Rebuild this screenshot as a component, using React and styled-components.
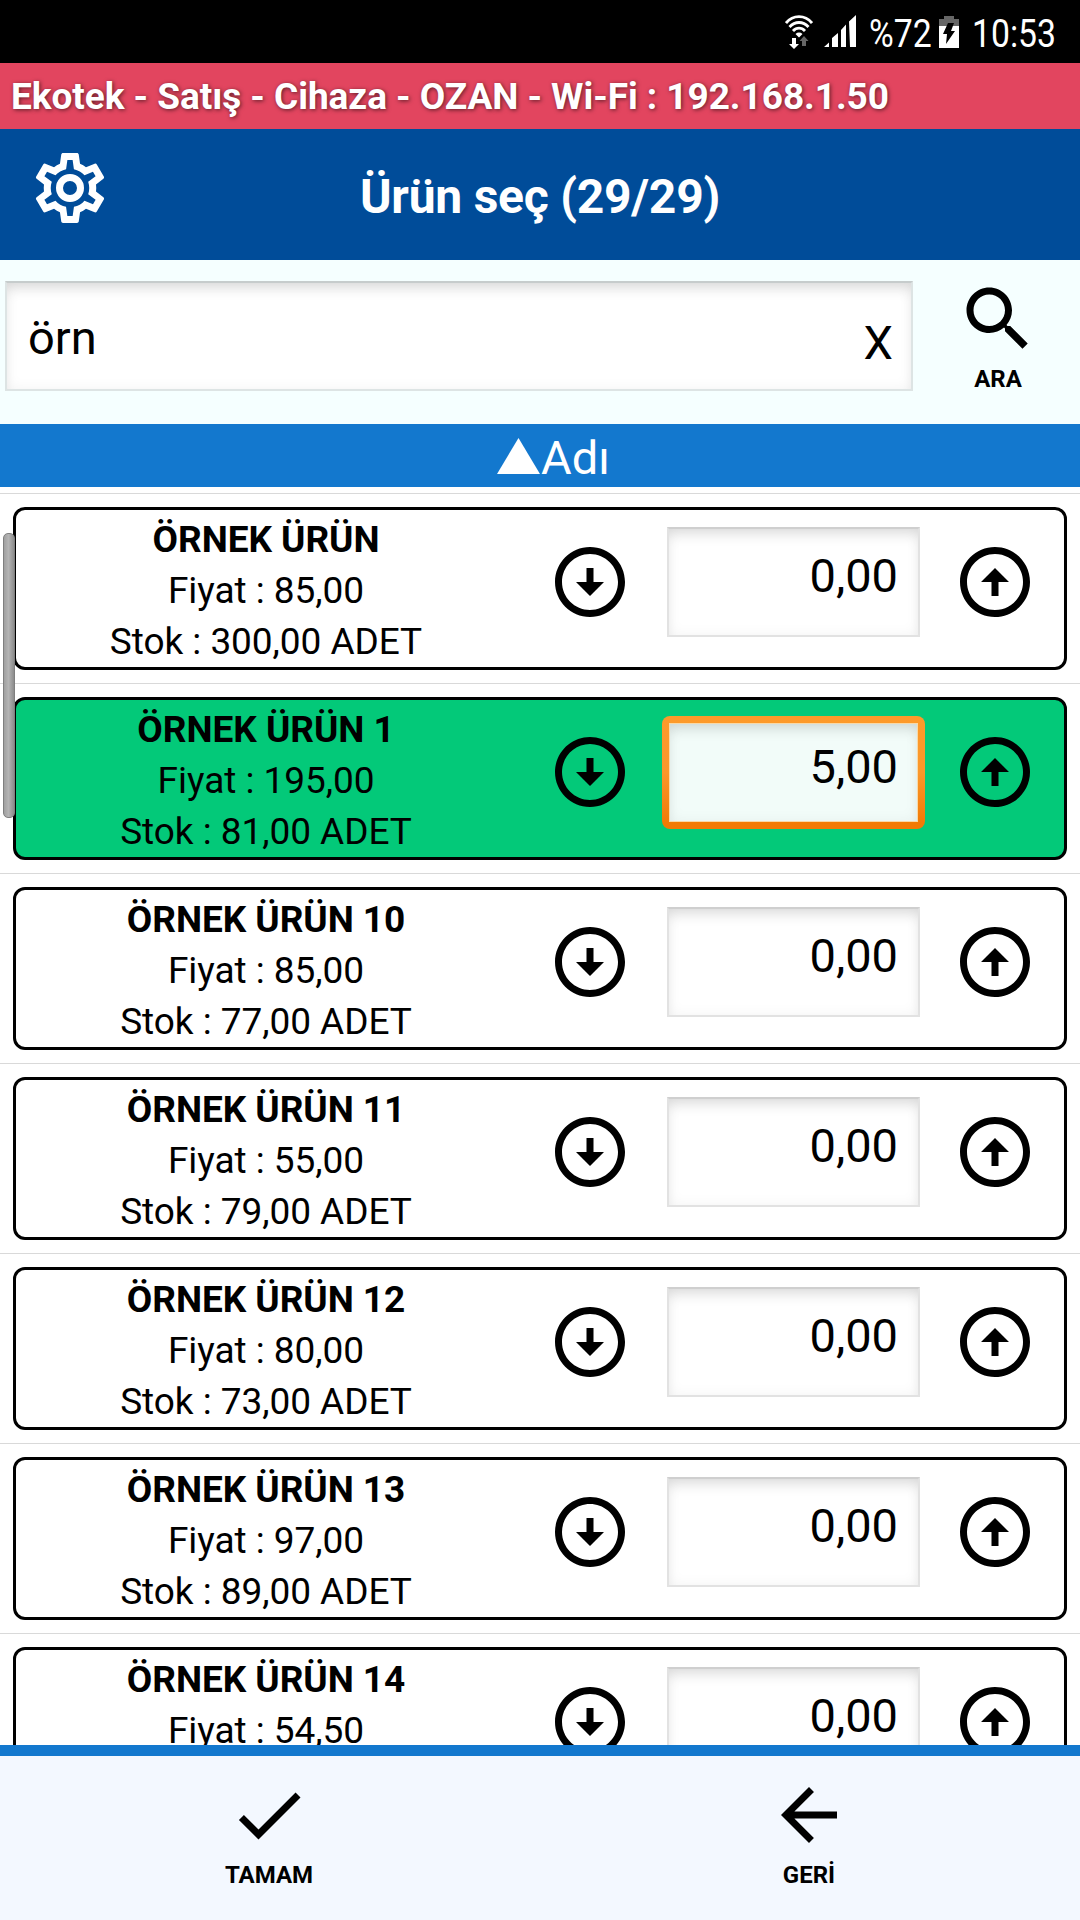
import React from 'react';
import styled, { createGlobalStyle } from 'styled-components';

const GlobalStyle = createGlobalStyle`
  * {
    box-sizing: border-box;
  }
  body {
    margin: 0;
    background: #fff;
    font-family: Roboto, sans-serif;
    color: #000;
  }
  input,
  button {
    font: inherit;
    color: inherit;
    border: none;
    background: none;
    padding: 0;
    outline: none;
  }
`;

const Screen = styled.div`
  width: 1080px;
  height: 1920px;
  display: flex;
  flex-direction: column;
  overflow: hidden;
`;

const StatusBar = styled.div`
  flex: none;
  height: 63px;
  background: #000;
  color: #fff;
  display: flex;
  align-items: center;
  justify-content: flex-end;
  padding-right: 25px;
  font-size: 39px;
  svg {
    display: block;
  }
`;

const StatusText = styled.span`
  width: ${({ $width }) => $width}px;
  margin-left: ${({ $left }) => $left}px;
  padding-top: 5px;
  white-space: nowrap;
  transform: scaleX(0.865);
  transform-origin: left;
`;

const StatusIcon = styled.svg`
  margin-left: ${({ $left }) => $left || 0}px;
`;

const ConnectionBar = styled.div`
  flex: none;
  height: 66px;
  line-height: 67px;
  padding-left: 11px;
  background: #e2455f;
  color: #fff;
  font-size: 37px;
  font-weight: 700;
  letter-spacing: -0.05px;
  white-space: nowrap;
  text-shadow: 1px 1px 4px rgba(0, 0, 0, 0.6);
`;

const Header = styled.header`
  flex: none;
  height: 131px;
  background: #004c99;
  color: #fff;
  display: grid;
  grid-template-columns: 140px 1fr 140px;
`;

const SettingsButton = styled.button`
  height: 84px;
  margin: 17px 0 0 28px;
  justify-self: start;
`;

const Title = styled.h1`
  margin: 0;
  padding-top: 2px;
  line-height: 131px;
  font-size: 48px;
  font-weight: 700;
  letter-spacing: -0.25px;
  text-align: center;
`;

const Glyph = styled.svg`
  display: block;
  width: 84px;
  height: 84px;
  fill: currentColor;
`;

const SearchBar = styled.div`
  flex: none;
  height: 164px;
  background: #f5ffff;
  display: flex;
  align-items: flex-start;
  padding: 17px 0 0 5px;
`;

const SearchField = styled.div`
  width: 908px;
  height: 110px;
  margin-top: 4px;
  padding: 0 18px 0 21px;
  display: flex;
  justify-content: space-between;
  background: #fff;
  border: 2px solid #dde4e4;
  border-top-color: #c6cccc;
  box-shadow: inset 0 10px 14px -5px rgba(0, 0, 0, 0.13), inset 0 0 14px rgba(0, 0, 0, 0.05);
  font-size: 47px;
`;

const SearchInput = styled.input`
  width: 600px;
  height: 109px;
`;

const ClearButton = styled.button`
  height: 119px;
`;

const SearchButton = styled.button`
  flex: 1;
  display: flex;
  flex-direction: column;
  align-items: center;
  gap: 4px;
  padding: 0 0 0 3px;
`;

const ButtonLabel = styled.span`
  font-size: 24px;
  line-height: 28px;
  font-weight: 700;
`;

const SortBar = styled.div`
  flex: none;
  height: 63px;
  line-height: 67px;
  background: #1378ce;
  color: #fff;
  display: flex;
  justify-content: center;
  padding-left: 27px;
  font-size: 47px;
`;

const SortArrow = styled.svg`
  width: 43px;
  height: 36px;
  margin: 14px 1px 0 0;
  fill: currentColor;
`;

const List = styled.div`
  flex: 1;
  min-height: 0;
  overflow: hidden;
  padding-top: 6px;
  position: relative;
`;

const ScrollThumb = styled.div`
  position: absolute;
  z-index: 1;
  left: 3px;
  top: 46px;
  width: 12px;
  height: 285px;
  border-radius: 5px;
  border: 1px solid #7f7f7f;
  background: linear-gradient(90deg, #a0a0a0, #b4b4b4 45%, #8c8c8c);
`;

const ListItem = styled.div`
  height: 190px;
  padding: 13px 13px;
  border-top: 1px solid #d9d9d9;
`;

const Card = styled.div`
  height: 163px;
  border: 3px solid #000;
  border-radius: 12px;
  background: ${({ $selected }) => ($selected ? '#03c979' : '#fff')};
  display: flex;
  align-items: flex-start;
`;

const Info = styled.div`
  width: 500px;
  padding-top: 4px;
  display: flex;
  flex-direction: column;
  align-items: center;
  font-size: 37px;
  line-height: 51px;
  letter-spacing: -0.05px;
  white-space: nowrap;
`;

const Name = styled.span`
  font-weight: 700;
`;

const StepButton = styled.button`
  height: 84px;
  margin: 30px 0 0 ${({ $left }) => $left}px;
`;

const Quantity = styled.input`
  width: 253px;
  height: 110px;
  margin: 17px 0 0 35px;
  padding: 0 20px 13px 0;
  text-align: right;
  font-size: 47px;
  background: #fff;
  border: 2px solid #e2e2e2;
  border-top-color: #cfcfcf;
  box-shadow: inset 0 10px 14px -5px rgba(0, 0, 0, 0.12), inset 0 0 14px rgba(0, 0, 0, 0.05);
`;

const FocusRing = styled.div`
  width: 263px;
  height: 113px;
  margin: 16px -5px 0 30px;
  padding: 7px;
  border-radius: 8px;
  background: linear-gradient(#fd9a2a 0%, #fb972a 50%, #f27a05 95%);
  ${Quantity} {
    display: block;
    width: 249px;
    height: 99px;
    margin: 0;
    padding: 0 19px 13px 0;
    background: #f2fcf9;
    border: 1px solid #f8d9a8;
  }
`;

const Footer = styled.footer`
  flex: none;
  height: 175px;
  border-top: 11px solid #1378ce;
  background: #f3f8ff;
  display: grid;
  grid-template-columns: 1fr 1fr;
`;

const FooterButton = styled.button`
  display: flex;
  flex-direction: column;
  align-items: center;
  padding: 17px 2px 0 0;
  gap: 4px;
`;

const products = [
  { name: 'ÖRNEK ÜRÜN', price: '85,00', stock: '300,00', quantity: '0,00' },
  { name: 'ÖRNEK ÜRÜN 1', price: '195,00', stock: '81,00', quantity: '5,00', selected: true },
  { name: 'ÖRNEK ÜRÜN 10', price: '85,00', stock: '77,00', quantity: '0,00' },
  { name: 'ÖRNEK ÜRÜN 11', price: '55,00', stock: '79,00', quantity: '0,00' },
  { name: 'ÖRNEK ÜRÜN 12', price: '80,00', stock: '73,00', quantity: '0,00' },
  { name: 'ÖRNEK ÜRÜN 13', price: '97,00', stock: '89,00', quantity: '0,00' },
  { name: 'ÖRNEK ÜRÜN 14', price: '54,50', quantity: '0,00' },
];

const icons = {
  settings:
    'M12,8A4,4 0 0,1 16,12A4,4 0 0,1 12,16A4,4 0 0,1 8,12A4,4 0 0,1 12,8M12,10A2,2 0 0,0 10,12A2,2 0 0,0 12,14A2,2 0 0,0 14,12A2,2 0 0,0 12,10M10,22C9.75,22 9.54,21.82 9.5,21.58L9.13,18.93C8.5,18.68 7.96,18.34 7.44,17.94L4.95,18.95C4.73,19.03 4.46,18.95 4.34,18.73L2.34,15.27C2.21,15.05 2.27,14.78 2.46,14.63L4.57,12.97L4.5,12L4.57,11L2.46,9.37C2.27,9.22 2.21,8.95 2.34,8.73L4.34,5.27C4.46,5.05 4.73,4.96 4.95,5.05L7.44,6.05C7.96,5.66 8.5,5.32 9.13,5.07L9.5,2.42C9.54,2.18 9.75,2 10,2H14C14.25,2 14.46,2.18 14.5,2.42L14.87,5.07C15.5,5.32 16.04,5.66 16.56,6.05L19.05,5.05C19.27,4.96 19.54,5.05 19.66,5.27L21.66,8.73C21.79,8.95 21.73,9.22 21.54,9.37L19.43,11L19.5,12L19.43,13L21.54,14.63C21.73,14.78 21.79,15.05 21.66,15.27L19.66,18.73C19.54,18.95 19.27,19.04 19.05,18.95L16.56,17.95C16.04,18.34 15.5,18.68 14.87,18.93L14.5,21.58C14.46,21.82 14.25,22 14,22H10M11.25,4L10.88,6.61C9.68,6.86 8.62,7.5 7.85,8.39L5.44,7.35L4.69,8.65L6.8,10.2C6.4,11.37 6.4,12.64 6.8,13.8L4.68,15.36L5.43,16.66L7.86,15.62C8.63,16.5 9.68,17.14 10.87,17.38L11.24,20H12.76L13.13,17.39C14.32,17.14 15.37,16.5 16.14,15.62L18.57,16.66L19.32,15.36L17.2,13.81C17.6,12.64 17.6,11.37 17.2,10.2L19.31,8.65L18.56,7.35L16.15,8.39C15.38,7.5 14.32,6.86 13.12,6.62L12.75,4H11.25Z',
  search:
    'M15.5 14h-.79l-.28-.27C15.41 12.59 16 11.11 16 9.5 16 5.91 13.09 3 9.5 3S3 5.91 3 9.5 5.91 16 9.5 16c1.61 0 3.09-.59 4.23-1.57l.27.28v.79l5 4.99L20.49 19l-4.99-5zm-6 0C7.01 14 5 11.99 5 9.5S7.01 5 9.5 5 14 7.01 14 9.5 11.99 14 9.5 14z',
  down:
    'M12 4c4.41 0 8 3.59 8 8s-3.59 8-8 8-8-3.59-8-8 3.59-8 8-8m0-2C6.48 2 2 6.48 2 12s4.48 10 10 10 10-4.48 10-10S17.52 2 12 2zm1 10V8h-2v4H8l4 4 4-4h-3z',
  up:
    'M12 20c-4.41 0-8-3.59-8-8s3.59-8 8-8 8 3.59 8 8-3.59 8-8 8m0 2c5.52 0 10-4.48 10-10S17.52 2 12 2 2 6.48 2 12s4.48 10 10 10zm-1-10v4h2v-4h3l-4-4-4 4h3z',
  check: 'M9 16.17L4.83 12l-1.42 1.41L9 19 21 7l-1.41-1.41z',
  back: 'M20 11H7.83l5.59-5.59L12 4l-8 8 8 8 1.41-1.41L7.83 13H20v-2z',
};

const Icon = ({ name }) => (
  <Glyph viewBox="0 0 24 24">
    <path d={icons[name]} />
  </Glyph>
);

const WifiIcon = () => (
  <StatusIcon width="28" height="34" viewBox="0 0 28 34">
    <g fill="none" stroke="#fff" strokeWidth="2.8">
      <path d="M1 8C8 -0.500 20 -0.500 27 8" />
      <path d="M4.500 12c5.500-6 13.500-6 19 0" />
      <path d="M8 16c3.500-3.800 8.500-3.800 12 0" />
    </g>
    <path fill="#fff" d="M10.500 19q3.500-2.800 7 0L14 22.500zM7 23h4v6h3l-5 5-5-5h3z" />
    <path fill="#666" d="M19 21l4.500 5h-2.500V31h-4v-5h-2.500z" />
  </StatusIcon>
);

const SignalIcon = () => (
  <StatusIcon $left={11} width="32" height="33" viewBox="0 0 32 33">
    <path fill="#fff" d="M0 32l5-4.500V32zM8 23l6-5v14H8zM17 15l5-5.500V32h-5zM25 6.500L32 0v32h-6z" />
  </StatusIcon>
);

const BatteryIcon = () => (
  <StatusIcon $left={9} width="20" height="32" viewBox="0 0 20 32">
    <path fill="#666" d="M5 0h10v3h5v8H0V3h5z" />
    <path fill="#fff" d="M0 10h20v22H0z" />
    <path fill="#000" d="M9 7h6l-3 8h4L7 28l1-10H4z" />
  </StatusIcon>
);

const Product = ({ name, price, stock, quantity, selected }) => (
  <ListItem>
    <Card $selected={selected}>
      <Info>
        <Name>{name}</Name>
        <span>Fiyat : {price}</span>
        {stock && <span>Stok : {stock} ADET</span>}
      </Info>
      <StepButton $left={32}>
        <Icon name="down" />
      </StepButton>
      {selected ? (
        <FocusRing>
          <Quantity defaultValue={quantity} />
        </FocusRing>
      ) : (
        <Quantity defaultValue={quantity} />
      )}
      <StepButton $left={33}>
        <Icon name="up" />
      </StepButton>
    </Card>
  </ListItem>
);

const App = () => (
  <Screen>
    <GlobalStyle />
    <StatusBar>
      <WifiIcon />
      <SignalIcon />
      <StatusText $left={13} $width={61}>
        %72
      </StatusText>
      <BatteryIcon />
      <StatusText $left={13} $width={83}>
        10:53
      </StatusText>
    </StatusBar>
    <ConnectionBar>Ekotek - Satış - Cihaza - OZAN - Wi-Fi : 192.168.1.50</ConnectionBar>
    <Header>
      <SettingsButton>
        <Icon name="settings" />
      </SettingsButton>
      <Title>Ürün seç (29/29)</Title>
    </Header>
    <SearchBar>
      <SearchField>
        <SearchInput defaultValue="örn" />
        <ClearButton>X</ClearButton>
      </SearchField>
      <SearchButton>
        <Icon name="search" />
        <ButtonLabel>ARA</ButtonLabel>
      </SearchButton>
    </SearchBar>
    <SortBar>
      <SortArrow viewBox="0 0 43 36">
        <path d="M21.500 0L43 36H0z" />
      </SortArrow>
      Adı
    </SortBar>
    <List>
      <ScrollThumb />
      {products.map((product) => (
        <Product key={product.name} {...product} />
      ))}
    </List>
    <Footer>
      <FooterButton>
        <Icon name="check" />
        <ButtonLabel>TAMAM</ButtonLabel>
      </FooterButton>
      <FooterButton>
        <Icon name="back" />
        <ButtonLabel>GERİ</ButtonLabel>
      </FooterButton>
    </Footer>
  </Screen>
);

export default App;
